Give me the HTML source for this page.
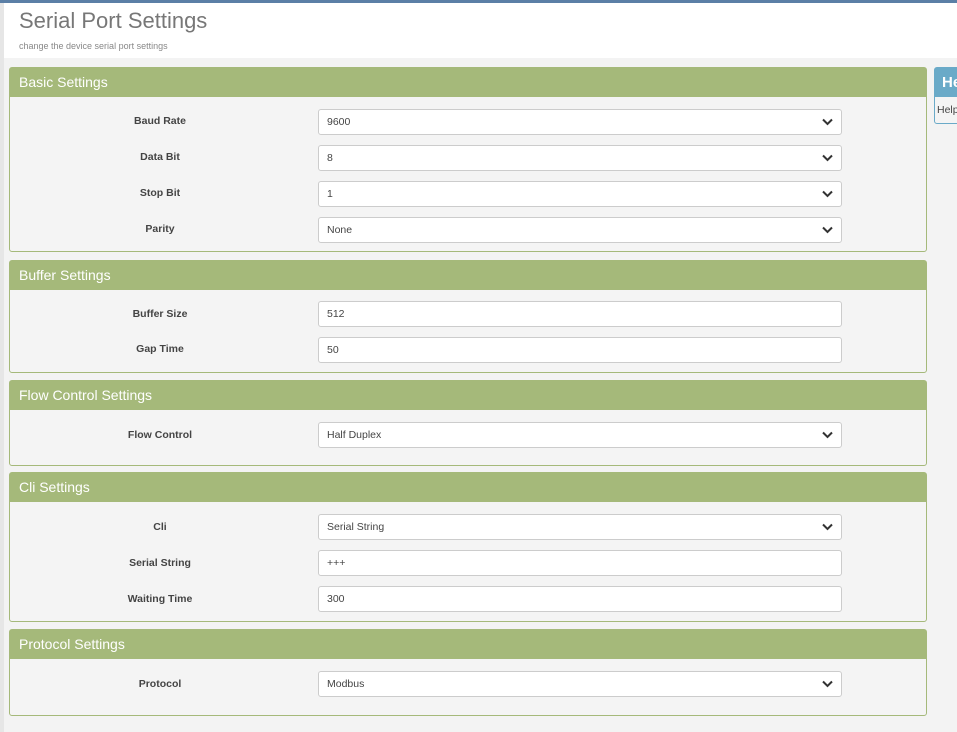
<!DOCTYPE html>
<html><head><style>
body{margin:0;width:957px;height:732px;background:#f3f3f3;font-family:"Liberation Sans",sans-serif;position:relative;overflow:hidden}
.top{position:absolute;left:0;top:0;width:957px;height:3px;background:#5b7fa6}
.hdr{position:absolute;left:4px;top:3px;width:953px;height:55px;background:#fff}
.strip{position:absolute;left:0;top:3px;width:4px;height:729px;background:#e6e6e6}
h1{position:absolute;left:19px;top:8px;margin:0;font-weight:300;font-size:22px;color:#777}
.sub{position:absolute;left:19px;top:41px;font-size:9px;color:#888}
.p{position:absolute;left:9px;width:916px;border:1px solid #a5b97a;border-radius:3px;background:#f4f4f4}
.ph{background:#a5b97a;color:#fff;font-size:14px;height:29px;line-height:29px;padding-left:9px}
.l{position:absolute;left:80px;width:140px;text-align:center;font-size:10.5px;font-weight:bold;color:#444}
.i{position:absolute;left:308px;width:514px;height:24px;border:1px solid #ccc;border-radius:3px;background:#fff;font-size:10.5px;color:#444;line-height:25px;padding-left:8px;box-sizing:content-box}
.i svg{position:absolute;right:8px;top:8px}
.help{position:absolute;left:934px;top:67px;width:30px;height:55px;border:1px solid #6aaac8;border-radius:3px;background:#f4f4f4}
.help .hh{background:#6aaac8;height:29px;color:#fff;font-size:15px;font-weight:bold;line-height:29px;padding-left:7px}
</style></head><body>
<div class="top"></div><div class="strip"></div><div class="hdr"></div>
<h1>Serial Port Settings</h1><div class="sub">change the device serial port settings</div>

<div class="p" style="top:67px;height:183px"><div class="ph">Basic Settings</div>
<div class="l" style="top:47px">Baud Rate</div><div class="i" style="top:41px">9600<svg width="11" height="8"><path d="M1 1.5l4.5 4.5 4.5-4.5" stroke="#333" stroke-width="2" fill="none"/></svg></div>
<div class="l" style="top:83px">Data Bit</div><div class="i" style="top:77px">8<svg width="11" height="8"><path d="M1 1.5l4.5 4.5 4.5-4.5" stroke="#333" stroke-width="2" fill="none"/></svg></div>
<div class="l" style="top:119px">Stop Bit</div><div class="i" style="top:113px">1<svg width="11" height="8"><path d="M1 1.5l4.5 4.5 4.5-4.5" stroke="#333" stroke-width="2" fill="none"/></svg></div>
<div class="l" style="top:155px">Parity</div><div class="i" style="top:149px">None<svg width="11" height="8"><path d="M1 1.5l4.5 4.5 4.5-4.5" stroke="#333" stroke-width="2" fill="none"/></svg></div>
</div>

<div class="p" style="top:260px;height:111px"><div class="ph">Buffer Settings</div>
<div class="l" style="top:47px">Buffer Size</div><div class="i" style="top:40px">512</div>
<div class="l" style="top:82px">Gap Time</div><div class="i" style="top:76px">50</div>
</div>

<div class="p" style="top:380px;height:84px"><div class="ph">Flow Control Settings</div>
<div class="l" style="top:48px">Flow Control</div><div class="i" style="top:41px">Half Duplex<svg width="11" height="8"><path d="M1 1.5l4.5 4.5 4.5-4.5" stroke="#333" stroke-width="2" fill="none"/></svg></div>
</div>

<div class="p" style="top:472px;height:148px"><div class="ph">Cli Settings</div>
<div class="l" style="top:48px">Cli</div><div class="i" style="top:41px">Serial String<svg width="11" height="8"><path d="M1 1.5l4.5 4.5 4.5-4.5" stroke="#333" stroke-width="2" fill="none"/></svg></div>
<div class="l" style="top:84px">Serial String</div><div class="i" style="top:77px">+++</div>
<div class="l" style="top:120px">Waiting Time</div><div class="i" style="top:113px">300</div>
</div>

<div class="p" style="top:629px;height:85px"><div class="ph">Protocol Settings</div>
<div class="l" style="top:48px">Protocol</div><div class="i" style="top:41px">Modbus<svg width="11" height="8"><path d="M1 1.5l4.5 4.5 4.5-4.5" stroke="#333" stroke-width="2" fill="none"/></svg></div>
</div>

<div class="help"><div class="hh">He</div><div style="font-size:10.5px;color:#444;padding:7px 0 0 2px">Help</div></div>
</body></html>
